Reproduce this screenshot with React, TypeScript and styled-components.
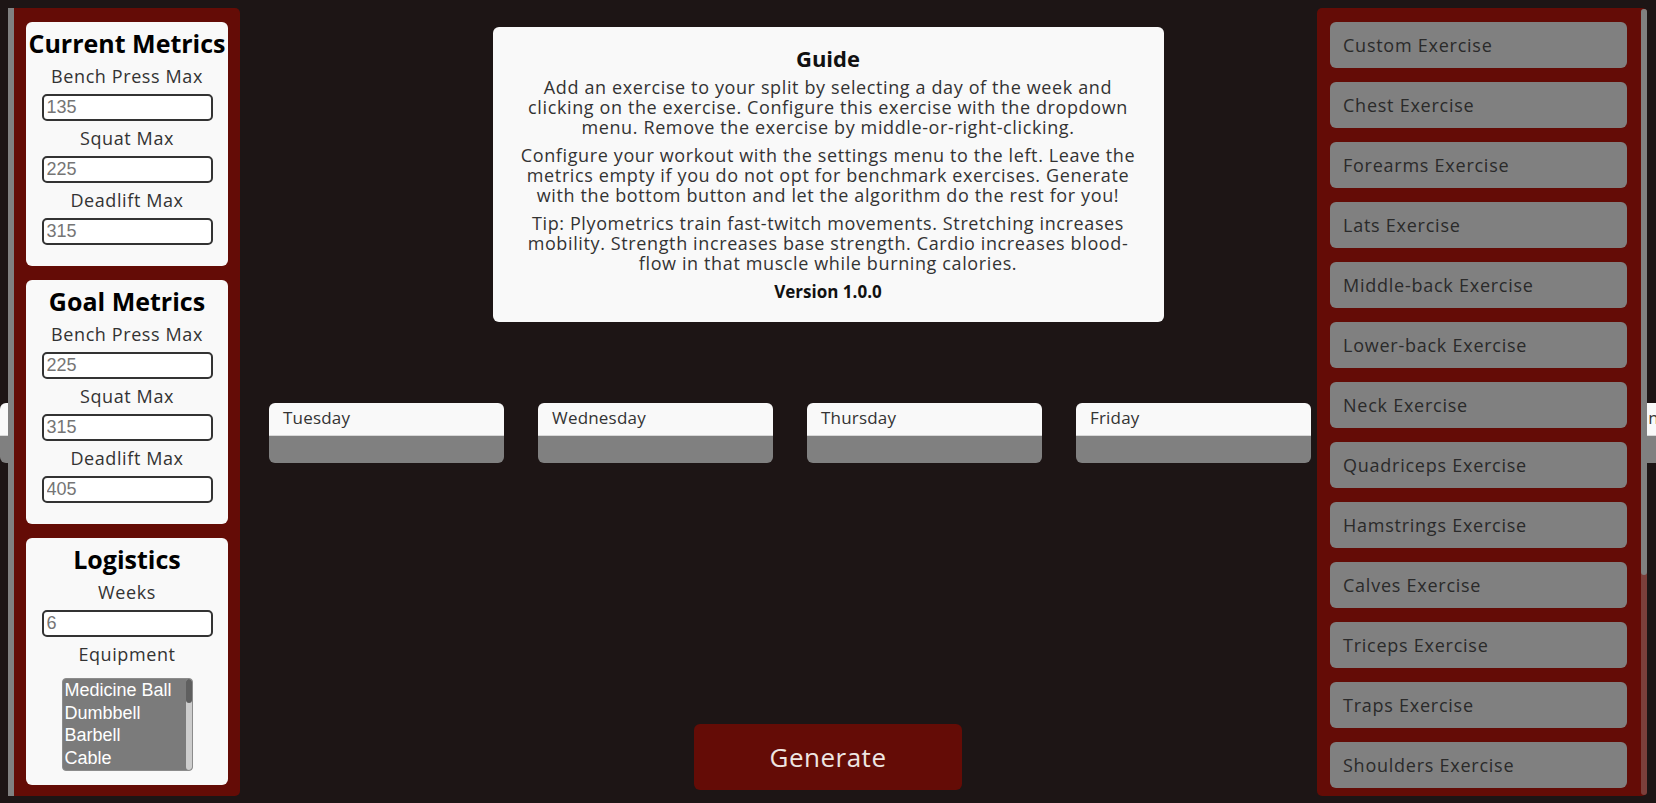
import React from "react";
import styled, { createGlobalStyle } from "styled-components";

const GlobalStyle = createGlobalStyle`
  html, body {
    margin: 0;
    padding: 0;
    background: #1d1515;
    overflow: hidden;
  }
  body {
    font-family: "Open Sans", "Noto Sans", sans-serif;
  }
  * { box-sizing: border-box; }
`;

const Page = styled.div`
  position: relative;
  width: 100vw;
  height: 100vh;
  overflow: hidden;
  background: #1d1515;
`;

const Main = styled.main`
  display: flex;
  flex-direction: column;
  align-items: center;
  padding-top: 27px;
  height: 100%;
`;

const GuideCard = styled.section`
  width: 671px;
  height: 295px;
  background: #f9f9f9;
  border-radius: 6px;
  padding: 18px 4px 0;
  text-align: center;
  color: #333;
`;

const GuideTitle = styled.h2`
  margin: 0 0 6px;
  font-size: 22px;
  line-height: 26px;
  font-weight: 700;
  color: #111;
`;

const GuideText = styled.p`
  margin: 0 0 8px;
  font-size: 18px;
  line-height: 20px;
  letter-spacing: 0.62px;
  white-space: nowrap;
`;

const Version = styled.p`
  margin: 0;
  font-size: 17px;
  line-height: 22px;
  font-weight: 700;
  color: #111;
`;

const DaysRow = styled.div`
  align-self: flex-start;
  display: flex;
  gap: 34px;
  margin-top: 81px;
`;

const DayCard = styled.div`
  flex: 0 0 235px;
  height: 60px;
  border-radius: 6px;
  overflow: hidden;
  display: flex;
  flex-direction: column;
`;

const DayHeader = styled.div`
  height: 33px;
  background: #f9f9f9;
  border-bottom: 1px solid #d8d8d8;
  padding-left: 14px;
  font-size: 17px;
  line-height: 30px;
  letter-spacing: 0.2px;
  color: #333;
`;

const DayBody = styled.div`
  flex: 1;
  background: #808080;
`;

const GenerateButton = styled.button`
  margin-top: 261px;
  width: 268px;
  height: 66px;
  border: none;
  border-radius: 6px;
  background: #640c06;
  color: #eee6e2;
  font-family: inherit;
  font-size: 26px;
  letter-spacing: 0.5px;
  cursor: pointer;
`;

const LeftPanel = styled.aside`
  position: absolute;
  top: 8px;
  left: 8px;
  width: 232px;
  height: 788px;
  background: #640c06;
  border-left: 6px solid #808080;
  border-radius: 0 5px 5px 0;
  padding: 14px 12px 0;
  display: flex;
  flex-direction: column;
  gap: 14px;
`;

const SettingsCard = styled.section<{ $bottom?: number }>`
  background: #f9f9f9;
  border-radius: 6px;
  display: flex;
  flex-direction: column;
  align-items: center;
  padding: 6px 0 ${(p) => p.$bottom ?? 21}px;
`;

const CardTitle = styled.h3`
  margin: 0 0 1px;
  font-size: 25px;
  line-height: 30px;
  font-weight: 700;
  white-space: nowrap;
  color: #000;
`;

const FieldLabel = styled.label`
  margin-top: 6px;
  font-size: 18px;
  line-height: 23px;
  color: #333;
  letter-spacing: 0.6px;
`;

const NumberInput = styled.input`
  margin-top: 6px;
  width: 171px;
  height: 27px;
  padding: 0 3px;
  border: 2px solid #333;
  border-radius: 5px;
  background: #fff;
  font-family: "Liberation Sans", Arial, sans-serif;
  font-size: 18px;
  color: #222;
  outline: none;
  &::placeholder {
    color: #757575;
  }
`;

const ListBox = styled.div`
  margin-top: 12px;
  width: 131px;
  height: 93px;
  background: #7b7b7b;
  border: 1px solid #8c8c8c;
  border-radius: 4px;
  display: flex;
  overflow: hidden;
`;

const ListOptions = styled.div`
  flex: 1;
  overflow: hidden;
`;

const ListOption = styled.div`
  padding: 0 2px;
  font-family: "Liberation Sans", Arial, sans-serif;
  font-size: 18px;
  line-height: 22.5px;
  color: #fff;
  white-space: nowrap;
`;

const ScrollTrack = styled.div<{ $track: string; $inset?: number }>`
  flex: 0 0 6px;
  margin: ${(p) => p.$inset ?? 0}px 0;
  background: ${(p) => p.$track};
  border-radius: 3px;
  display: flex;
  flex-direction: column;
`;

const ScrollThumb = styled.div<{ $color: string; $size: string }>`
  flex: 0 0 ${(p) => p.$size};
  background: ${(p) => p.$color};
  border-radius: 3px;
`;

const RightPanel = styled.aside`
  position: absolute;
  top: 8px;
  right: 9px;
  width: 330px;
  height: 788px;
  background: #640c06;
  border-radius: 5px;
  display: flex;
`;

const ExerciseList = styled.div`
  flex: 1;
  overflow: hidden;
  padding: 14px 14px 14px 13px;
  display: flex;
  flex-direction: column;
  gap: 14px;
`;

const ExerciseItem = styled.div`
  flex: 0 0 46px;
  background: #808080;
  border-radius: 6px;
  padding-left: 13px;
  display: flex;
  align-items: center;
  font-size: 18px;
  letter-spacing: 0.75px;
  color: #2a2a2a;
  cursor: pointer;
`;

const days = ["Monday", "Tuesday", "Wednesday", "Thursday", "Friday", "Saturday", "Sunday"];

const exercises = [
  "Custom",
  "Chest",
  "Forearms",
  "Lats",
  "Middle-back",
  "Lower-back",
  "Neck",
  "Quadriceps",
  "Hamstrings",
  "Calves",
  "Triceps",
  "Traps",
  "Shoulders",
  "Abdominals",
  "Glutes",
  "Biceps",
  "Adductors",
  "Abductors",
];

const equipment = [
  "Medicine Ball",
  "Dumbbell",
  "Barbell",
  "Cable",
  "Kettlebells",
  "Bands",
  "Machine",
  "Body Only",
  "Foam Roll",
  "E-Z Curl Bar",
  "Exercise Ball",
  "Pull-up Bar",
  "Bench",
  "Smith Machine",
  "Plate",
  "Other",
];

type Field = { label: string; placeholder: string };

const MetricsCard: React.FC<{ title: string; fields: Field[] }> = ({ title, fields }) => (
  <SettingsCard>
    <CardTitle>{title}</CardTitle>
    {fields.map((f) => (
      <React.Fragment key={f.label}>
        <FieldLabel>{f.label}</FieldLabel>
        <NumberInput type="number" placeholder={f.placeholder} />
      </React.Fragment>
    ))}
  </SettingsCard>
);

export default function App() {
  return (
    <Page>
      <GlobalStyle />
      <Main>
        <GuideCard>
          <GuideTitle>Guide</GuideTitle>
          <GuideText>
            Add an exercise to your split by selecting a day of the week and
            <br />
            clicking on the exercise. Configure this exercise with the dropdown
            <br />
            menu. Remove the exercise by middle-or-right-clicking.
          </GuideText>
          <GuideText>
            Configure your workout with the settings menu to the left. Leave the
            <br />
            metrics empty if you do not opt for benchmark exercises. Generate
            <br />
            with the bottom button and let the algorithm do the rest for you!
          </GuideText>
          <GuideText>
            Tip: Plyometrics train fast-twitch movements. Stretching increases
            <br />
            mobility. Strength increases base strength. Cardio increases blood-
            <br />
            flow in that muscle while burning calories.
          </GuideText>
          <Version>Version 1.0.0</Version>
        </GuideCard>

        <DaysRow>
          {days.map((d) => (
            <DayCard key={d}>
              <DayHeader>{d}</DayHeader>
              <DayBody />
            </DayCard>
          ))}
        </DaysRow>

        <GenerateButton>Generate</GenerateButton>
      </Main>

      <LeftPanel>
        <MetricsCard
          title="Current Metrics"
          fields={[
            { label: "Bench Press Max", placeholder: "135" },
            { label: "Squat Max", placeholder: "225" },
            { label: "Deadlift Max", placeholder: "315" },
          ]}
        />
        <MetricsCard
          title="Goal Metrics"
          fields={[
            { label: "Bench Press Max", placeholder: "225" },
            { label: "Squat Max", placeholder: "315" },
            { label: "Deadlift Max", placeholder: "405" },
          ]}
        />
        <SettingsCard $bottom={14}>
          <CardTitle>Logistics</CardTitle>
          <FieldLabel>Weeks</FieldLabel>
          <NumberInput type="number" placeholder="6" />
          <FieldLabel>Equipment</FieldLabel>
          <ListBox>
            <ListOptions>
              {equipment.map((e) => (
                <ListOption key={e}>{e}</ListOption>
              ))}
            </ListOptions>
            <ScrollTrack $track="#cdcdcd">
              <ScrollThumb $color="#5f5f5f" $size="24px" />
            </ScrollTrack>
          </ListBox>
        </SettingsCard>
      </LeftPanel>

      <RightPanel>
        <ExerciseList>
          {exercises.map((e) => (
            <ExerciseItem key={e}>{e} Exercise</ExerciseItem>
          ))}
        </ExerciseList>
        <ScrollTrack $track="#7c3f3b" $inset={1}>
          <ScrollThumb $color="#808080" $size="566px" />
        </ScrollTrack>
      </RightPanel>
    </Page>
  );
}
